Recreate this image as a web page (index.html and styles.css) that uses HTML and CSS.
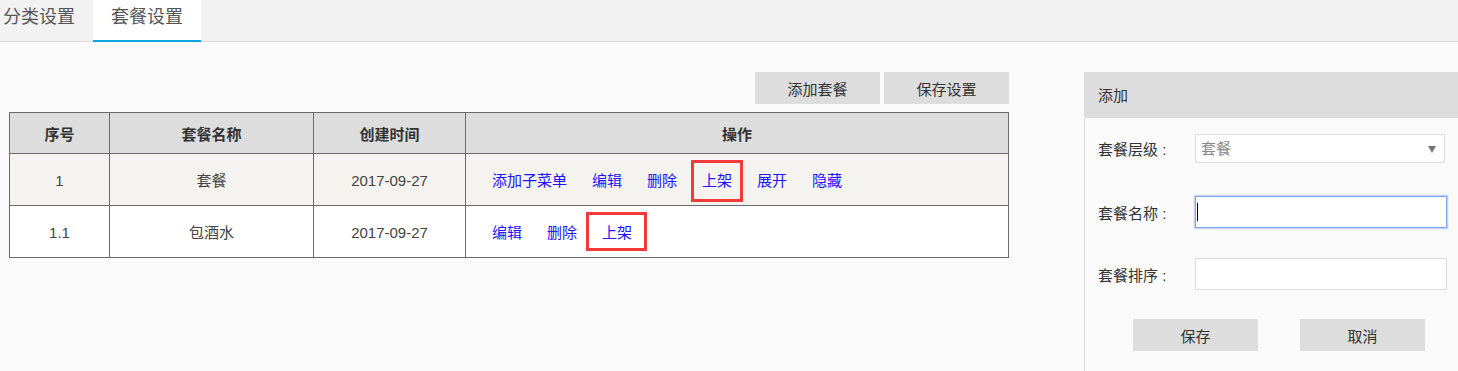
FILE: index.html
```html
<!DOCTYPE html>
<html lang="zh-CN">

<head>
    <meta charset="utf-8">
    <title>套餐设置</title>
    <meta name="viewport" content="width=device-width, initial-scale=1">
    <link rel="stylesheet" href="styles.css">
</head>

<body class="page">
    <div class="tab-bar">
        <a class="tab tab-first">分类设置</a>
        <a class="tab tab-active">套餐设置</a>
    </div>

    <div class="main">
        <div class="list-area">
            <div class="toolbar">
                <button class="btn">添加套餐</button>
                <button class="btn">保存设置</button>
            </div>

            <table class="grid">
                <thead>
                    <tr>
                        <th class="col-no">序号</th>
                        <th class="col-name">套餐名称</th>
                        <th class="col-date">创建时间</th>
                        <th>操作</th>
                    </tr>
                </thead>
                <tbody>
                    <tr class="row-parent">
                        <td>1</td>
                        <td>套餐</td>
                        <td>2017-09-27</td>
                        <td class="ops">
                            <a>添加子菜单</a><a>编辑</a><a>删除</a><a class="mark mark-a">上架</a><a>展开</a><a>隐藏</a>
                        </td>
                    </tr>
                    <tr>
                        <td>1.1</td>
                        <td>包酒水</td>
                        <td>2017-09-27</td>
                        <td class="ops">
                            <a>编辑</a><a>删除</a><a class="mark mark-b">上架</a>
                        </td>
                    </tr>
                </tbody>
            </table>
        </div>

        <div class="side">
            <div class="side-head">添加</div>
            <div class="side-form">
                <div class="form-row row-level">
                    <label class="form-label">套餐层级 :</label>
                    <div class="select">
                        <span class="select-text">套餐</span>
                        <span class="select-arrow"></span>
                    </div>
                </div>
                <div class="form-row row-name">
                    <label class="form-label">套餐名称 :</label>
                    <div class="field">
                        <input class="input input-focus" type="text">
                        <span class="caret"></span>
                    </div>
                </div>
                <div class="form-row row-sort">
                    <label class="form-label">套餐排序 :</label>
                    <div class="field">
                        <input class="input" type="text">
                    </div>
                </div>
                <div class="form-actions">
                    <button class="btn btn-small">保存</button>
                    <button class="btn btn-small">取消</button>
                </div>
            </div>
        </div>
    </div>
</body>

</html>
```

FILE: styles.css
```css
.page {
    margin: 0;
    min-height: 100vh;
    display: flex;
    flex-direction: column;
    background-color: #fafafa;
    color: #333;
    font-family: "Liberation Sans", "Noto Sans CJK SC", sans-serif;
    font-size: 15px;
    overflow: hidden;
}

/* tabs */
.tab-bar {
    display: flex;
    align-items: flex-start;
    height: 41px;
    background-color: #f2f2f2;
    border-bottom: 1px solid #dcdcdc;
}

.tab {
    display: block;
    height: 40px;
    line-height: 34px;
    padding: 0 18px;
    font-size: 18px;
    color: #555;
    border-bottom: 2px solid transparent;
}

.tab-first {
    margin-left: -15px;
}

.tab-active {
    background-color: #fff;
    border-bottom-color: #0ea2e2;
}

/* layout */
.main {
    flex: 1;
    display: flex;
    padding-top: 30px;
}

.list-area {
    margin-left: 9px;
    width: 1000px;
}

.toolbar {
    display: flex;
    justify-content: flex-end;
    gap: 4px;
    margin-bottom: 8px;
}

.btn {
    width: 125px;
    height: 32px;
    border: none;
    background-color: #dddddd;
    color: #333;
    font-family: inherit;
    font-size: 15px;
    padding: 0;
}

/* table */
.grid {
    width: 1000px;
    table-layout: fixed;
    border-collapse: collapse;
    text-align: center;
}

.grid th,
.grid td {
    border: 1px solid #6b6b6b;
    padding: 0;
}

.grid th {
    height: 40px;
    background-color: #dddddd;
    font-weight: bold;
    color: #333;
}

.grid td {
    height: 48px;
    background-color: #fff;
    color: #444;
    line-height: 20px;
    padding-top: 3px;
}

.grid .row-parent td {
    background-color: #f4f3f0;
}

.col-no {
    width: 99px;
}

.col-name {
    width: 203px;
}

.col-date {
    width: 151px;
}

.grid .ops {
    text-align: left;
    padding-left: 26px;
}

.ops a {
    display: inline-block;
    margin-right: 25px;
    color: #2310ff;
    cursor: pointer;
}

.mark {
    position: relative;
}

.mark::after {
    content: "";
    position: absolute;
    border: 3px solid #f23a3a;
}

.mark-a::after {
    left: -11px;
    right: -11px;
    top: -11px;
    bottom: -11px;
}

.mark-b::after {
    left: -16px;
    right: -15px;
    top: -11px;
    bottom: -8px;
}

/* side panel */
.side {
    flex: 1;
    margin-left: 75px;
    border-left: 1px solid #dddddd;
}

.side-head {
    height: 46px;
    line-height: 48px;
    padding-left: 13px;
    background-color: #dddddd;
    color: #333;
}

.side-form {
    padding-left: 13px;
}

.form-row {
    display: flex;
    align-items: center;
}

.row-level {
    margin-top: 16px;
}

.row-name {
    margin-top: 33px;
}

.row-sort {
    margin-top: 30px;
}

.form-label {
    width: 97px;
    color: #333;
}

.select {
    position: relative;
    box-sizing: border-box;
    width: 250px;
    height: 29px;
    line-height: 27px;
    padding-left: 5px;
    background-color: #fff;
    border: 1px solid #dddddd;
    color: #888;
}

.select-arrow {
    position: absolute;
    right: 8px;
    top: 11px;
    width: 0;
    height: 0;
    border-top: 7px solid #777;
    border-left: 4px solid transparent;
    border-right: 4px solid transparent;
}

.field {
    position: relative;
}

.input {
    display: block;
    box-sizing: border-box;
    width: 252px;
    height: 32px;
    margin: 0;
    padding: 0 5px;
    background-color: #fff;
    border: 1px solid #dddddd;
    outline: none;
    caret-color: transparent;
}

.input-focus {
    border-color: #7ea6ee;
    box-shadow: 0 0 1px 1px rgba(126, 166, 238, 0.45);
}

.caret {
    position: absolute;
    left: 2px;
    top: 7px;
    width: 1px;
    height: 18px;
    background-color: #000;
}

.form-actions {
    display: flex;
    gap: 42px;
    margin-top: 29px;
    padding-left: 35px;
}
```
